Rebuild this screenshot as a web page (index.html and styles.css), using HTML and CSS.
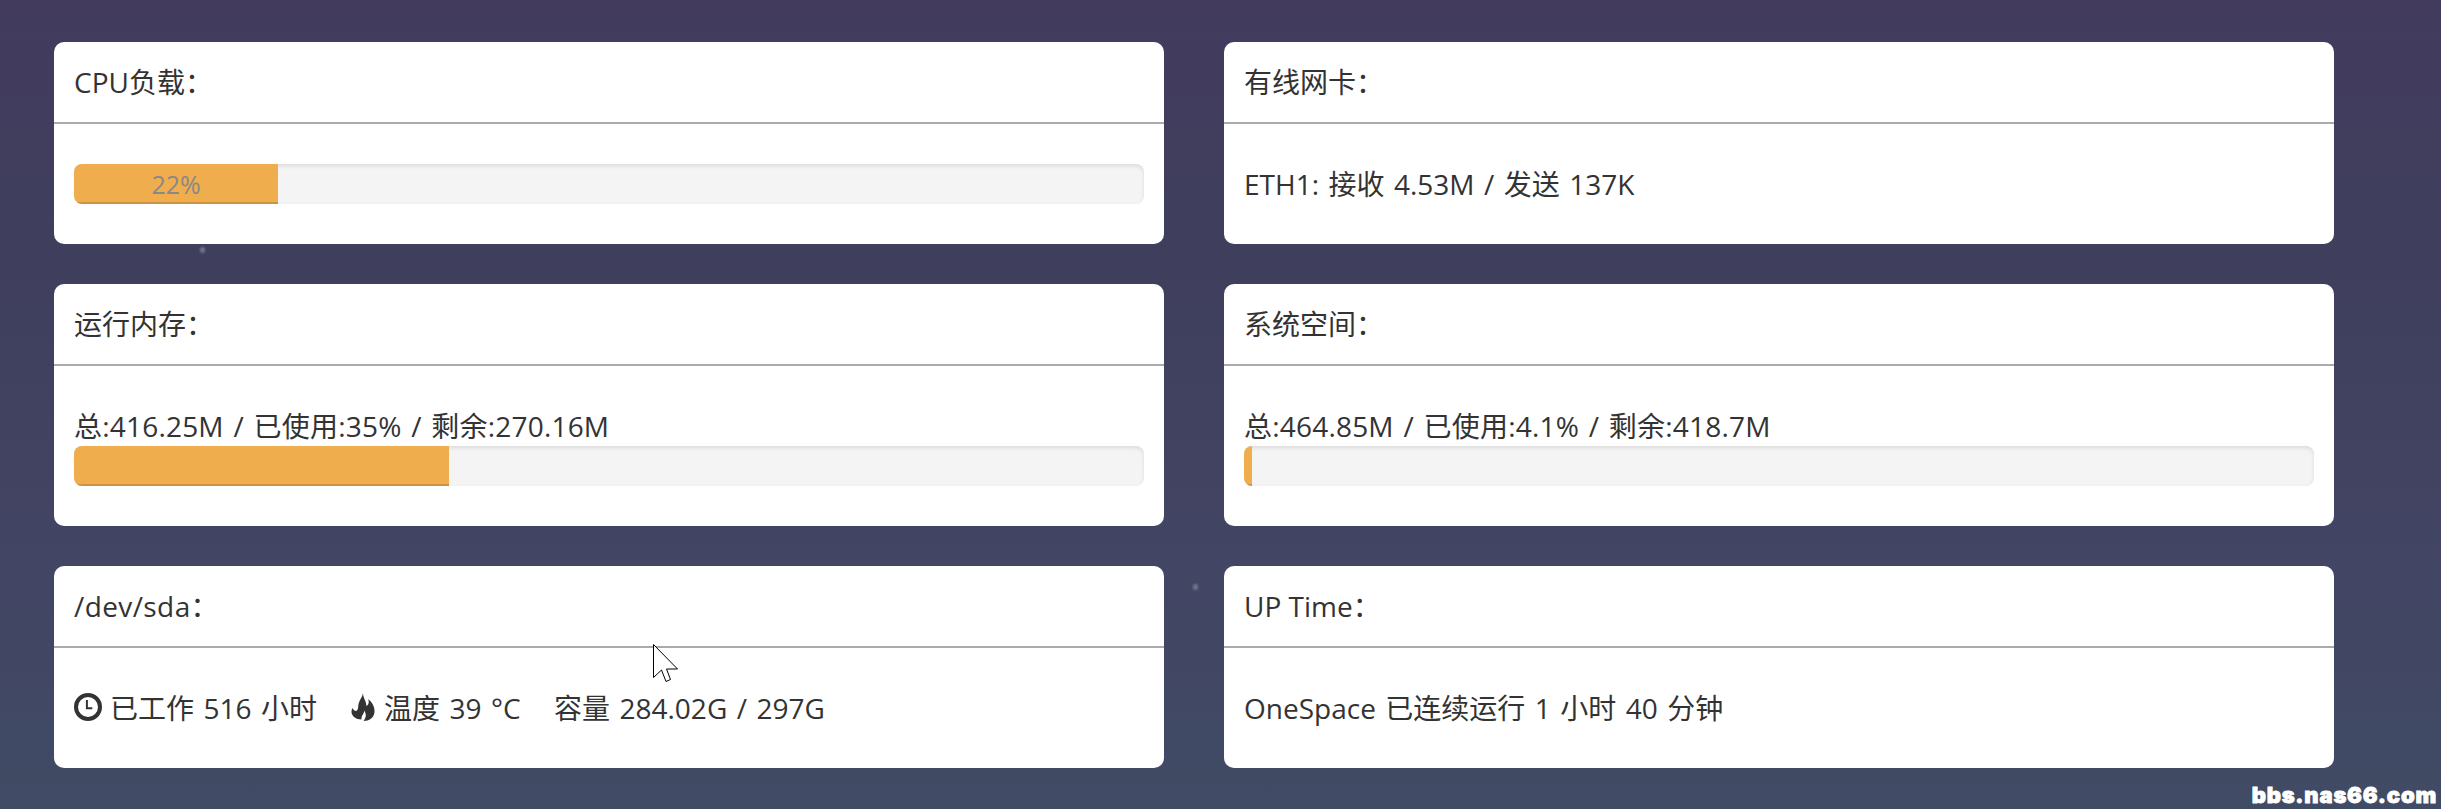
FILE: index.html
```html
<!DOCTYPE html>
<html lang="zh-CN">
<head>
  <meta charset="UTF-8">
  <meta name="viewport" content="width=device-width, initial-scale=1.0">
  <title>OneSpace</title>
  <link rel="stylesheet" href="styles.css">
</head>
<body>
  <div class="container">
    <div class="panel">
      <div class="panel-heading">CPU负载：</div>
      <div class="panel-body">
        <div class="progress">
          <div class="progress-bar" style="width: 19.07%">22%</div>
        </div>
      </div>
    </div>
    <div class="panel">
      <div class="panel-heading">有线网卡：</div>
      <div class="panel-body"><div class="info">ETH1: 接收 4.53M / 发送 137K</div></div>
    </div>

    <div class="panel">
      <div class="panel-heading">运行内存：</div>
      <div class="panel-body">
        <div class="usage">总:416.25M / 已使用:35% / 剩余:270.16M</div>
        <div class="progress">
          <div class="progress-bar" style="width: 35%"></div>
        </div>
      </div>
    </div>
    <div class="panel">
      <div class="panel-heading">系统空间：</div>
      <div class="panel-body">
        <div class="usage">总:464.85M / 已使用:4.1% / 剩余:418.7M</div>
        <div class="progress">
          <div class="progress-bar" style="width: 0.75%"></div>
        </div>
      </div>
    </div>

    <div class="panel">
      <div class="panel-heading path">/dev/sda：</div>
      <div class="panel-body disk">
        <div class="item work">
          <svg class="icon clock" viewBox="0 0 28 28">
            <circle cx="14" cy="14" r="12" fill="none" stroke="currentColor" stroke-width="4"/>
            <path d="M12.9 7v8.3h5.4" fill="none" stroke="currentColor" stroke-width="2"/>
          </svg>
          <span>已工作 516 小时</span>
        </div>
        <div class="item temp">
          <svg class="icon fire" viewBox="0 0 24 28">
            <path fill="currentColor" d="M12 0C12 5 15 7 15.500 13C17.500 12 18.500 9 17 6C21 9 24 14 23.500 19C23 25 18 28 12.500 28C15.500 24 15.500 21 13 17.500C13.500 21 10 22 10.500 26.500C5 26.500 .5 23 .5 19C.5 17 1 16 1.500 15C2.500 17 3.500 18 5 18C8 17 6.500 13 8 9.500C9 6 11.500 4 12 0Z"/>
          </svg>
          <span>温度 39 °C</span>
        </div>
        <div class="item">容量 284.02G / 297G</div>
      </div>
    </div>
    <div class="panel">
      <div class="panel-heading">UP Time：</div>
      <div class="panel-body"><div class="info">OneSpace 已连续运行 1 小时 40 分钟</div></div>
    </div>
  </div>

  <i class="star star-left"></i>
  <i class="star star-right"></i>
  <svg class="cursor" viewBox="0 0 26 39">
    <path d="M.5 .5V33.500L8.500 26L13 37.500L17.500 35.500L13.500 25H24.500Z" fill="#fff" stroke="#000"/>
  </svg>
  <div class="watermark">bbs.nas66.com</div>
</body>
</html>
```

FILE: styles.css
```css
* {
  box-sizing: border-box;
}
body {
  position: relative;
  margin: 0;
  height: 809px;
  overflow: hidden;
  font-family: "Open Sans", "Noto Sans CJK SC", sans-serif;
  font-size: 28px;
  line-height: 40px;
  color: #333;
  background: linear-gradient(#423b5d, #3f3f5d 32%, #424563 70%, #404b64);
}
.container {
  display: grid;
  grid-template-columns: 1110px 1110px;
  gap: 40px 60px;
  padding: 42px 54px 0;
}
.panel {
  background: #fff;
  border-radius: 10px;
}
.panel-heading {
  height: 82px;
  padding: 20px;
  border-bottom: 2px solid #aaa;
}
.path {
  letter-spacing: 0.4px;
}
.panel-body {
  padding: 40px 20px;
  white-space: nowrap;
  word-spacing: 2.2px;
}
.usage {
  letter-spacing: 0.2px;
}
.progress {
  height: 40px;
  overflow: hidden;
  background: #f4f4f4;
  border-radius: 8px;
  box-shadow: inset 0 2px 4px rgba(0, 0, 0, 0.1);
}
.progress-bar {
  height: 100%;
  font-size: 25px;
  text-align: center;
  color: #888;
  background: #f0ad4e;
  box-shadow: inset 0 -2px 0 rgba(0, 0, 0, 0.15);
}
.disk,
.item {
  display: flex;
}
.icon {
  flex: none;
}
.clock {
  width: 28px;
  height: 28px;
  margin: 5px 8px 0 0;
}
.fire {
  width: 24px;
  height: 28px;
  margin: 5px 9px 0 0;
}
.work {
  width: 277px;
}
.temp {
  width: 203px;
}
.star {
  position: absolute;
  width: 5px;
  height: 6px;
  border-radius: 50%;
  background: #74778b;
  filter: blur(1px);
}
.star-left {
  left: 200px;
  top: 247px;
}
.star-right {
  left: 1193px;
  top: 584px;
}
.cursor {
  position: absolute;
  left: 653px;
  top: 644px;
  width: 26px;
  height: 39px;
}
.watermark {
  position: absolute;
  right: 4px;
  bottom: 0;
  font: 900 22px/28px Inter, sans-serif;
  letter-spacing: 0.8px;
  -webkit-text-stroke: 0.8px #fff;
  color: #fff;
}
```
